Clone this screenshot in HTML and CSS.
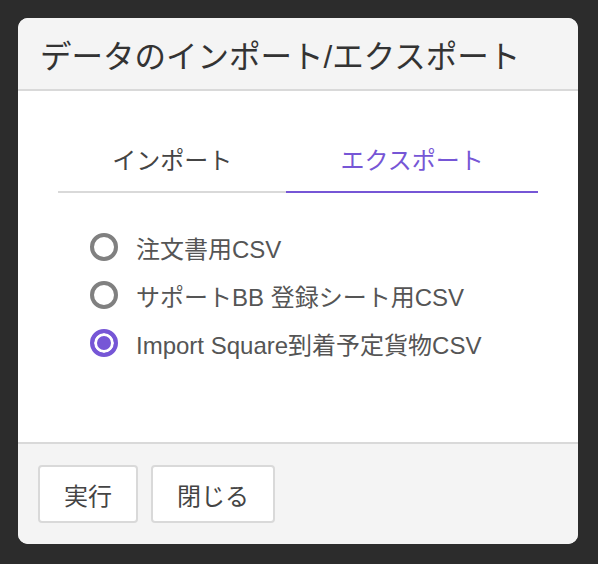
FILE: index.html
```html
<!DOCTYPE html>
<html lang="ja">
<head>
  <meta charset="UTF-8">
  <title>データのインポート/エクスポート</title>
  <meta name="viewport" content="width=device-width, initial-scale=1.0">
  <link rel="stylesheet" href="styles.css">
</head>
<body>
  <div class="dialog">
    <div class="dialog-header">データのインポート/エクスポート</div>

    <div class="dialog-body">
      <div class="tabs">
        <button class="tab" id="tab-import" onclick="setTab('import')">インポート</button>
        <button class="tab active" id="tab-export" onclick="setTab('export')">エクスポート</button>
      </div>

      <div class="options">
        <label class="option">
          <input type="radio" name="format" value="order">
          <span class="dot"></span>
          <span>注文書用CSV</span>
        </label>
        <label class="option">
          <input type="radio" name="format" value="support">
          <span class="dot"></span>
          <span>サポートBB 登録シート用CSV</span>
        </label>
        <label class="option">
          <input type="radio" name="format" value="square" checked>
          <span class="dot"></span>
          <span>Import Square到着予定貨物CSV</span>
        </label>
      </div>
    </div>

    <div class="dialog-footer">
      <button class="btn">実行</button>
      <button class="btn">閉じる</button>
    </div>
  </div>

  <script>
    function setTab(t) {
      document.getElementById('tab-import').classList.remove('active');
      document.getElementById('tab-export').classList.remove('active');
      document.getElementById('tab-' + t).classList.add('active');
    }
  </script>
</body>
</html>
```

FILE: styles.css
```css
:root {
  --accent: #7656d6;
  --line: #d9d9d9;
}

body {
  margin: 0;
  padding: 18px 20px 20px 18px;
  background: #2c2c2c;
  font-family: "Liberation Sans", "Noto Sans CJK JP", sans-serif;
  color: #444;
}

.dialog {
  width: 560px;
  background: #fff;
  border-radius: 10px;
  overflow: hidden;
}

.dialog-header {
  height: 71px;
  padding-left: 22px;
  display: flex;
  align-items: center;
  background: #f4f4f4;
  border-bottom: 2px solid var(--line);
  font-size: 31.5px;
  color: #333;
}

.dialog-body {
  padding: 40px 40px 75px;
}

.tabs {
  display: flex;
}

.tab {
  flex: 1 1 auto;
  padding: 12px 0;
  text-align: center;
  background: none;
  border: none;
  border-bottom: 2px solid var(--line);
  font-family: inherit;
  font-size: 24px;
  line-height: 36px;
  color: #444;
  cursor: pointer;
}

.tab.active {
  color: var(--accent);
  border-bottom-color: var(--accent);
}

.options {
  padding: 30px 0 0 32px;
}

.option {
  display: flex;
  align-items: center;
  gap: 18px;
  height: 48px;
  font-size: 24px;
  color: #555;
  cursor: pointer;
}

.option input {
  display: none;
}

.dot {
  width: 20px;
  height: 20px;
  border: 4px solid #808080;
  border-radius: 50%;
  flex: none;
}

.option input:checked + .dot {
  border-color: var(--accent);
  background: var(--accent);
  box-shadow: inset 0 0 0 3px #fff;
}

.dialog-footer {
  display: flex;
  gap: 13px;
  padding: 21px 20px;
  background: #f4f4f4;
  border-top: 2px solid var(--line);
}

.btn {
  height: 58px;
  padding: 0 24px;
  background: #fff;
  border: 2px solid var(--line);
  border-radius: 4px;
  font-family: inherit;
  font-size: 24px;
  color: #444;
  cursor: pointer;
}
```
